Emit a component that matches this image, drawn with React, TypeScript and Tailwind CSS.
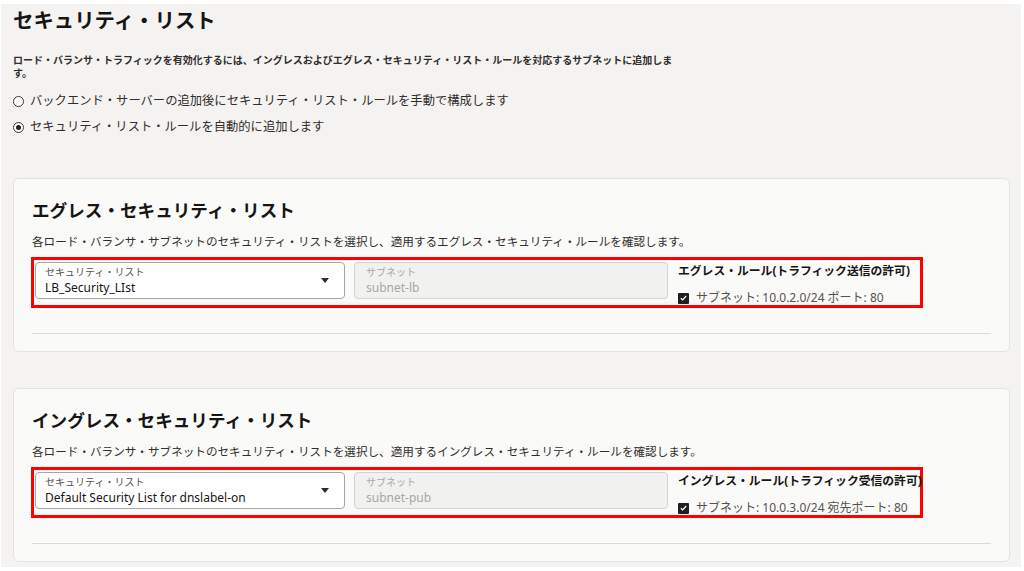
import React from 'react'

const font = { fontFamily: '"Noto Sans", "Noto Sans CJK JP", sans-serif' }

function Caret() {
  return (
    <svg width="8" height="5" viewBox="0 0 8 5" className="shrink-0">
      <path d="M0 0h8L4 5z" fill="#2b2b2b" />
    </svg>
  )
}

function Check() {
  return (
    <span className="w-[11px] h-[11px] rounded-[1px] bg-[#1f1f1f] flex items-center justify-center shrink-0">
      <svg width="7" height="6" viewBox="0 0 7 6">
        <path d="M0.8 3.2 2.7 5 6.2 1" fill="none" stroke="#fff" strokeWidth="1.2" />
      </svg>
    </span>
  )
}

type SectionProps = {
  title: string
  desc: string
  list: string
  subnet: string
  ruleTitle: string
  rule: string
}

function Section({ title, desc, list, subnet, ruleTitle, rule }: SectionProps) {
  return (
    <div className="border border-[#e4e3e1] rounded-[6px] bg-[#fafaf9] px-[18px] pt-[19px] pb-[17px]">
      <h2 className="h-[24px] flex items-center text-[17.6px] font-bold text-[#161513]">{title}</h2>
      <p className="mt-[12px] h-[16px] flex items-center text-[11.6px] text-[#312d2a]">{desc}</p>
      <div className="mt-[7px] -ml-[1px] border-[3px] border-[#ff0000] pl-[1px] pt-[2px] pb-[6px] w-[892px] h-[51px] flex">
        <div className="shrink-0 w-[310px] h-[37px] bg-white border border-[#a6a5a3] rounded-[4px] pl-[9px] pr-[15px] flex items-center">
          <div className="flex-1 flex flex-col">
            <span className="h-[14px] flex items-center text-[10px] text-[#57524e]">セキュリティ・リスト</span>
            <span className="h-[16px] flex items-center text-[12px] text-[#161513]">{list}</span>
          </div>
          <Caret />
        </div>
        <div className="shrink-0 ml-[9px] w-[314px] h-[37px] bg-[#f1f1f0] border border-[#d4d3d1] rounded-[4px] pl-[11px] flex flex-col justify-center">
          <span className="h-[14px] flex items-center text-[10px] text-[#a9a7a4]">サブネット</span>
          <span className="h-[16px] flex items-center text-[12px] text-[#a9a7a4]">{subnet}</span>
        </div>
        <div className="ml-[10px] flex flex-col pt-[1px]">
          <span className="h-[16px] flex items-center text-[11.8px] font-bold text-[#161513] whitespace-nowrap">{ruleTitle}</span>
          <div className="mt-[11px] h-[16px] flex items-center gap-[7px]">
            <Check />
            <span className="text-[12px] text-[#57524e] whitespace-nowrap">{rule}</span>
          </div>
        </div>
      </div>
      <div className="mt-[25px] h-px bg-[#dcdbd9]" />
    </div>
  )
}

export default function App() {
  return (
    <div className="bg-white pt-[4px] pl-[1px] pr-[3px] pb-[4px]" style={font}>
      <div className="bg-[#f4f3f1] h-[563px] pl-[12px] pr-[11px] pt-[2px] overflow-hidden">
        <h1 className="h-[28px] flex items-center text-[20.4px] font-bold text-[#161513]">
          セキュリティ・リスト
        </h1>
        <p className="mt-[20px] w-[665px] text-[10px] leading-[13px] font-semibold text-[#312d2a]">
          ロード・バランサ・トラフィックを有効化するには、イングレスおよびエグレス・セキュリティ・リスト・ルールを対応するサブネットに追加します。
        </p>
        <div className="mt-[12px] flex flex-col gap-[8px]">
          <label className="flex items-center gap-[6px] h-[18px]">
            <span className="w-[11px] h-[11px] rounded-full border border-[#3a3632] bg-white shrink-0" />
            <span className="text-[12.3px] text-[#312d2a]">バックエンド・サーバーの追加後にセキュリティ・リスト・ルールを手動で構成します</span>
          </label>
          <label className="flex items-center gap-[6px] h-[18px]">
            <span className="w-[11px] h-[11px] rounded-full border border-[#3a3632] bg-white flex items-center justify-center shrink-0">
              <span className="w-[5px] h-[5px] rounded-full bg-[#1f1f1f]" />
            </span>
            <span className="text-[12.3px] text-[#312d2a]">セキュリティ・リスト・ルールを自動的に追加します</span>
          </label>
        </div>
        <div className="mt-[42px] flex flex-col gap-[36px]">
          <Section
            title="エグレス・セキュリティ・リスト"
            desc="各ロード・バランサ・サブネットのセキュリティ・リストを選択し、適用するエグレス・セキュリティ・ルールを確認します。"
            list="LB_Security_LIst"
            subnet="subnet-lb"
            ruleTitle="エグレス・ルール(トラフィック送信の許可)"
            rule="サブネット: 10.0.2.0/24 ポート: 80"
          />
          <Section
            title="イングレス・セキュリティ・リスト"
            desc="各ロード・バランサ・サブネットのセキュリティ・リストを選択し、適用するイングレス・セキュリティ・ルールを確認します。"
            list="Default Security List for dnslabel-on"
            subnet="subnet-pub"
            ruleTitle="イングレス・ルール(トラフィック受信の許可)"
            rule="サブネット: 10.0.3.0/24 宛先ポート: 80"
          />
        </div>
      </div>
    </div>
  )
}
